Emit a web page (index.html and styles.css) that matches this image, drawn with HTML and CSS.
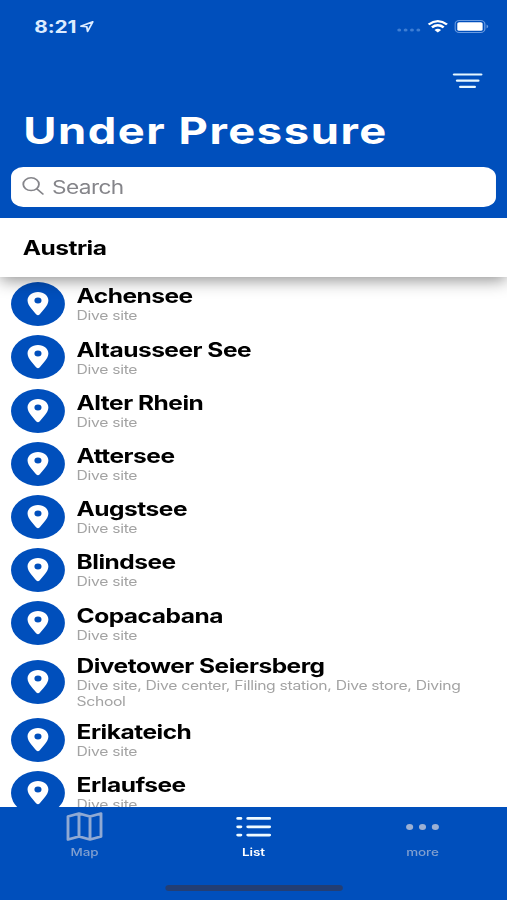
FILE: index.html
```html
<!DOCTYPE html>
<html lang="en">
<head>
  <meta charset="UTF-8" />
  <meta name="viewport" content="width=device-width, initial-scale=1.0" />
  <title>Under Pressure</title>
  <link rel="stylesheet" href="styles.css">
</head>
<body>
  <!-- shared marker icon -->
  <svg class="defs" width="0" height="0">
    <symbol id="pin" viewBox="0 0 18 24">
      <path fill-rule="evenodd" d="M9 0C4 0 .5 3.700 .5 8.500C.5 13.500 5 18.500 7.700 22.400Q9 24 10.300 22.400C13 18.500 17.500 13.500 17.500 8.500C17.500 3.700 14 0 9 0ZM9 5.600A2.900 2.900 0 1 1 9 11.400A2.900 2.900 0 1 1 9 5.600Z"/>
    </symbol>
  </svg>

  <div class="app">
    <header class="header">
      <div class="status-bar">
        <div class="status-time">
          <span>8:21</span>
          <svg class="location" viewBox="0 0 12 12"><path d="M1 5.700L10.800 1.200L6.500 11L5.900 6.300Z"/></svg>
        </div>
        <div class="status-icons">
          <svg class="signal" viewBox="0 0 20 4"><circle cx="2" cy="2" r="1.600"/><circle cx="7.200" cy="2" r="1.600"/><circle cx="12.400" cy="2" r="1.600"/><circle cx="17.600" cy="2" r="1.600"/></svg>
          <svg class="wifi" viewBox="0 0 17 13">
            <path d="M1 4.500Q8.500 -2.200 16 4.500M3.700 7.300Q8.500 3.200 13.300 7.300"/>
            <path class="wifi-dot" d="M5.800 9.900Q8.500 7.700 11.200 9.900L8.500 12.600Z"/>
          </svg>
          <svg class="battery" viewBox="0 0 28 13"><rect class="battery-case" x=".6" y=".6" width="24.300" height="11.800" rx="3.500"/><rect x="2.400" y="2.200" width="20.700" height="8.600" rx="1.500"/><path class="battery-tip" d="M26.300 4.400Q29 6.500 26.300 8.600Z"/></svg>
        </div>
      </div>
      <div class="toolbar">
        <svg class="filter" viewBox="0 0 26 16"><path d="M1.800 1.500H23.900M4.300 7.700H21.500M6.900 13.900H18.600"/></svg>
      </div>
      <h1>Under Pressure</h1>
      <div class="search">
        <svg viewBox="0 0 18 18"><circle cx="7.400" cy="7.200" r="6.400"/><path d="M12 11.700L17 17"/></svg>
        <span>Search</span>
      </div>
    </header>

    <main class="content">
      <h2 class="section-title">Austria</h2>
      <ul class="site-list">
        <li><div class="marker"><svg><use href="#pin"/></svg></div><div><h3>Achensee</h3><p>Dive site</p></div></li>
        <li><div class="marker"><svg><use href="#pin"/></svg></div><div><h3>Altausseer See</h3><p>Dive site</p></div></li>
        <li><div class="marker"><svg><use href="#pin"/></svg></div><div><h3>Alter Rhein</h3><p>Dive site</p></div></li>
        <li><div class="marker"><svg><use href="#pin"/></svg></div><div><h3>Attersee</h3><p>Dive site</p></div></li>
        <li><div class="marker"><svg><use href="#pin"/></svg></div><div><h3>Augstsee</h3><p>Dive site</p></div></li>
        <li><div class="marker"><svg><use href="#pin"/></svg></div><div><h3>Blindsee</h3><p>Dive site</p></div></li>
        <li><div class="marker"><svg><use href="#pin"/></svg></div><div><h3>Copacabana</h3><p>Dive site</p></div></li>
        <li><div class="marker"><svg><use href="#pin"/></svg></div><div><h3>Divetower Seiersberg</h3><p>Dive site, Dive center, Filling station, Dive store, Diving School</p></div></li>
        <li><div class="marker"><svg><use href="#pin"/></svg></div><div><h3>Erikateich</h3><p>Dive site</p></div></li>
        <li><div class="marker"><svg><use href="#pin"/></svg></div><div><h3>Erlaufsee</h3><p>Dive site</p></div></li>
      </ul>
    </main>

    <nav class="tab-bar">
      <div class="tabs">
        <div class="tab">
          <svg class="icon-map" viewBox="0 0 30 29"><path d="M1.500 4.500L10.500 1.500L19.500 4.500L28.500 1.500V24.500L19.500 27.500L10.500 24.500L1.500 27.500ZM10.500 1.500V24.500M19.500 4.500V27.500"/></svg>
          <span>Map</span>
        </div>
        <div class="tab active">
          <svg class="icon-list" viewBox="0 0 30 22"><path d="M2.300 2.400H4.500M10.500 2.400H28M2.300 10.800H4.500M10.500 10.800H28M2.300 19.100H4.500M10.500 19.100H28"/></svg>
          <span>List</span>
        </div>
        <div class="tab">
          <svg class="icon-more" viewBox="0 0 28 8"><circle cx="3.500" cy="4" r="2.900"/><circle cx="14" cy="4" r="2.900"/><circle cx="24.500" cy="4" r="2.900"/></svg>
          <span>more</span>
        </div>
      </div>
      <div class="home-indicator"></div>
    </nav>
  </div>
</body>
</html>
```
FILE: styles.css
```css
* {
  margin: 0;
  padding: 0;
  box-sizing: border-box;
}

body {
  width: 507px;
  height: 900px;
  overflow: hidden;
  background: #fff;
  font-family: Inter, "Liberation Sans", sans-serif;
}

.defs {
  display: block;
}

.app {
  width: 414px;
  height: 900px;
  display: flex;
  flex-direction: column;
  transform: scaleX(1.22464);
  transform-origin: 0 0;
}

.app svg {
  display: block;
  flex: none;
}

.header {
  height: 218px;
  flex: none;
  padding: 0 9px;
  background: #004fbc;
  color: #fff;
}

.status-bar {
  height: 52px;
  padding: 0 6px 0 19px;
  display: flex;
  justify-content: space-between;
  align-items: center;
}

.status-time {
  display: flex;
  align-items: center;
  gap: 3px;
  padding-top: 1px;
  font-size: 17px;
  letter-spacing: -0.1px;
  font-weight: 700;
  color: #dcebff;
}

.location {
  width: 12px;
  height: 13px;
  fill: none;
  stroke: #dcebff;
  stroke-width: 1.5;
  stroke-linejoin: round;
}

.status-icons {
  display: flex;
  align-items: center;
}

.signal {
  width: 20px;
  height: 4px;
  margin: 8px 5px 0 0;
  fill: #3e7ed4;
}

.wifi {
  width: 17px;
  height: 13px;
  margin-right: 5px;
  fill: none;
  stroke: #fff;
  stroke-width: 2.2;
}

.wifi-dot {
  fill: #fff;
  stroke: none;
}

.battery {
  width: 28px;
  height: 13px;
  fill: #fff;
}

.battery-case {
  fill: none;
  stroke: #6a9ce2;
}

.battery-tip {
  fill: #6a9ce2;
}

.toolbar {
  height: 56px;
  padding: 21px 10px 0 0;
  display: flex;
  justify-content: flex-end;
}

.filter {
  width: 26px;
  height: 16px;
  fill: none;
  stroke: #e6f7ff;
  stroke-width: 2.2;
  stroke-linecap: round;
}

h1 {
  height: 59px;
  padding-left: 10px;
  font-size: 37px;
  line-height: 45px;
  font-weight: 700;
  letter-spacing: 1.25px;
  white-space: nowrap;
}

.search {
  height: 40px;
  padding-left: 9px;
  display: flex;
  align-items: center;
  gap: 6.500px;
  background: #fff;
  border-radius: 10px;
  font-size: 18.500px;
  letter-spacing: -0.5px;
  color: #85858a;
}

.search svg {
  width: 18px;
  height: 18px;
  margin-bottom: 3px;
  fill: none;
  stroke: #85858a;
  stroke-width: 1.5;
  stroke-linecap: round;
}

.content {
  height: 589px;
  flex: none;
  overflow: hidden;
}

.section-title {
  position: relative;
  height: 59px;
  padding-left: 18.500px;
  background: #fff;
  box-shadow: 0 3px 14px rgba(0, 0, 0, 0.45);
  font-size: 20px;
  line-height: 60px;
  font-weight: 700;
  letter-spacing: -0.4px;
  color: #000;
}

.site-list {
  padding-top: 0.700px;
  list-style: none;
}

.site-list li {
  min-height: 53.200px;
  padding: 4px 20px 4px 9.200px;
  display: flex;
  align-items: center;
  gap: 9.300px;
}

.marker {
  width: 44px;
  height: 44px;
  flex: none;
  display: flex;
  align-items: center;
  justify-content: center;
  border-radius: 50%;
  background: #004fbc;
}

.marker svg {
  width: 18px;
  height: 24px;
  fill: #fff;
}

h3 {
  font-size: 20px;
  line-height: 24px;
  font-weight: 700;
  letter-spacing: -0.4px;
  color: #000;
}

.site-list p {
  font-size: 12.800px;
  line-height: 15.700px;
  letter-spacing: -0.240px;
  color: #a3a3a3;
}

.tab-bar {
  height: 93px;
  flex: none;
  background: #004fbc;
}

.tabs {
  height: 76px;
  display: flex;
}

.tab {
  flex: 1;
  padding-top: 5px;
  display: grid;
  grid-template-rows: 29px 22px;
  align-content: start;
  align-items: center;
  justify-items: center;
  font-size: 11px;
  font-weight: 500;
  letter-spacing: -0.1px;
  color: #7f9fd0;
}

.tab.active {
  font-weight: 600;
  color: #fff;
}

.icon-map {
  width: 30px;
  height: 29px;
  fill: none;
  stroke: #8fa9d3;
  stroke-width: 2.4;
  stroke-linejoin: round;
}

.icon-list {
  width: 30px;
  height: 22px;
  fill: none;
  stroke: #f0fbff;
  stroke-width: 2.8;
  stroke-linecap: round;
}

.icon-more {
  width: 28px;
  height: 8px;
  fill: #9bb0d4;
}

.home-indicator {
  width: 145px;
  height: 6px;
  margin: 2px auto 0;
  border-radius: 3px;
  background: #233e74;
}
```
